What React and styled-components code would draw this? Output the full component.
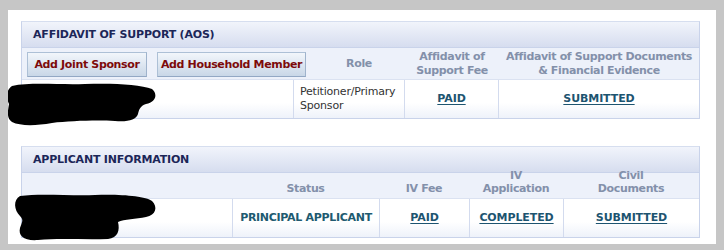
import React from "react";
import styled, { createGlobalStyle } from "styled-components";

const GlobalStyle = createGlobalStyle`
  html, body {
    margin: 0;
    padding: 0;
    background: #c6c6c6;
    font-family: "DejaVu Sans", Verdana, sans-serif;
    font-size: 11px;
  }
`;

const Page = styled.div`
  width: 724px;
  height: 250px;
  padding: 10px 8px 6px 8px;
  box-sizing: border-box;
`;

const Panel = styled.div`
  background: #fff;
  height: 234px;
  padding: 11px 16px 0 13px;
  box-sizing: border-box;
  display: flex;
  flex-direction: column;
  gap: 27px;
  position: relative;
`;

const Section = styled.div`
  border: 1px solid #c9d3ea;
  border-top-color: #d6deef;
`;

const TitleBar = styled.div`
  height: 25px;
  display: flex;
  align-items: center;
  padding-left: 11px;
  background: linear-gradient(#f1f4fb, #d6ddef);
  border-bottom: 1px solid #c9d3ea;
  color: #1c2658;
  font-weight: bold;
  letter-spacing: -0.2px;
`;

const Row = styled.div`
  display: grid;
  grid-template-columns: ${(p) => p.cols};
  grid-template-rows: ${(p) => p.h}px;
  overflow: visible;
`;

const HeadRow = styled(Row)`
  background: #edf1fa;
`;

const DataRow = styled(Row)`
  background: linear-gradient(#ffffff 60%, #eef2fa);
  border-top: 1px solid #dbe2f1;
`;

const HeadCell = styled.div`
  display: flex;
  align-items: ${(p) => (p.bottom ? "flex-end" : "center")};
  justify-content: center;
  text-align: center;
  color: #8390aa;
  font-weight: bold;
  letter-spacing: -0.35px;
  line-height: ${(p) => (p.bottom ? "13px" : "14px")};
  padding-bottom: ${(p) => (p.bottom ? "3px" : "0")};
  min-height: 0;
`;

const ButtonCell = styled.div`
  display: flex;
  align-items: center;
  gap: 10px;
  padding-left: 5px;
`;

const Button = styled.button`
  height: 25px;
  width: ${(p) => p.w}px;
  padding: 0;
  white-space: nowrap;
  border: 1px solid #adc0d6;
  border-right-color: #9fb3cc;
  border-bottom-color: #93a8c4;
  background: linear-gradient(#f2f6fb, #c9d7e7);
  color: #7d0a0a;
  font-family: "DejaVu Sans", Verdana, sans-serif;
  font-size: 11px;
  font-weight: bold;
  letter-spacing: -0.35px;
  margin-top: 1px;
`;

const Cell = styled.div`
  display: flex;
  align-items: center;
  justify-content: ${(p) => (p.left ? "flex-start" : "center")};
  padding-left: ${(p) => (p.left ? "6px" : "0")};
  border-left: ${(p) => (p.first ? "none" : "1px solid #d3dbee")};
  line-height: 14px;
  color: #333;
  letter-spacing: -0.2px;
`;

const LinkText = styled.a`
  color: #1d5470;
  font-weight: bold;
  letter-spacing: -0.1px;
  text-decoration: underline;
  text-underline-offset: 2px;
`;

const StatusText = styled.span`
  color: #205a70;
  font-weight: bold;
  letter-spacing: -0.3px;
`;

const Redaction = styled.svg`
  position: absolute;
  left: 0;
  top: 0;
  pointer-events: none;
`;

export default function App() {
  return (
    <Page>
      <GlobalStyle />
      <Panel>
        <Section>
          <TitleBar>AFFIDAVIT OF SUPPORT (AOS)</TitleBar>
          <HeadRow h={31} cols="291px 92px 94px 1fr">
            <ButtonCell>
              <Button w={120}>Add Joint Sponsor</Button>
              <Button w={149}>Add Household Member</Button>
            </ButtonCell>
            <HeadCell>Role</HeadCell>
            <HeadCell>Affidavit of<br />Support Fee</HeadCell>
            <HeadCell>Affidavit of Support Documents<br />&amp; Financial Evidence</HeadCell>
          </HeadRow>
          <DataRow h={38} cols="271px 111px 94px 1fr">
            <Cell first />
            <Cell left>Petitioner/Primary<br />Sponsor</Cell>
            <Cell><LinkText>PAID</LinkText></Cell>
            <Cell><LinkText>SUBMITTED</LinkText></Cell>
          </DataRow>
        </Section>

        <Section>
          <TitleBar>APPLICANT INFORMATION</TitleBar>
          <HeadRow h={25} cols="210px 147px 90px 94px 1fr">
            <HeadCell />
            <HeadCell bottom>Status</HeadCell>
            <HeadCell bottom>IV Fee</HeadCell>
            <HeadCell bottom>IV<br />Application</HeadCell>
            <HeadCell bottom>Civil<br />Documents</HeadCell>
          </HeadRow>
          <DataRow h={38} cols="210px 147px 90px 94px 1fr">
            <Cell first />
            <Cell><StatusText>PRINCIPAL APPLICANT</StatusText></Cell>
            <Cell><LinkText>PAID</LinkText></Cell>
            <Cell><LinkText>COMPLETED</LinkText></Cell>
            <Cell><LinkText>SUBMITTED</LinkText></Cell>
          </DataRow>
        </Section>

        <Redaction width="708" height="234" viewBox="0 0 708 234">
          <g fill="#000" transform="translate(-8,-10)">
            <path d="M12 86 C30 82 60 85 85 84 C110 83 140 84 152 89 C158 94 156 102 146 104 C140 106 139 110 138 114 C136 120 128 122 115 121 C95 120 70 121 52 123 C35 126 20 126 12 122 C6 118 8 110 9 104 C6 98 6 90 12 86 Z" />
            <path d="M20 196 C40 193 70 196 95 195 C120 194 145 196 152 201 C158 207 156 215 146 217 C136 219 124 219 118 222 C120 230 118 238 108 239 C85 240 60 238 38 240 C24 241 18 236 20 228 C22 222 24 220 20 216 C14 210 13 200 20 196 Z" />
          </g>
        </Redaction>
      </Panel>
    </Page>
  );
}
